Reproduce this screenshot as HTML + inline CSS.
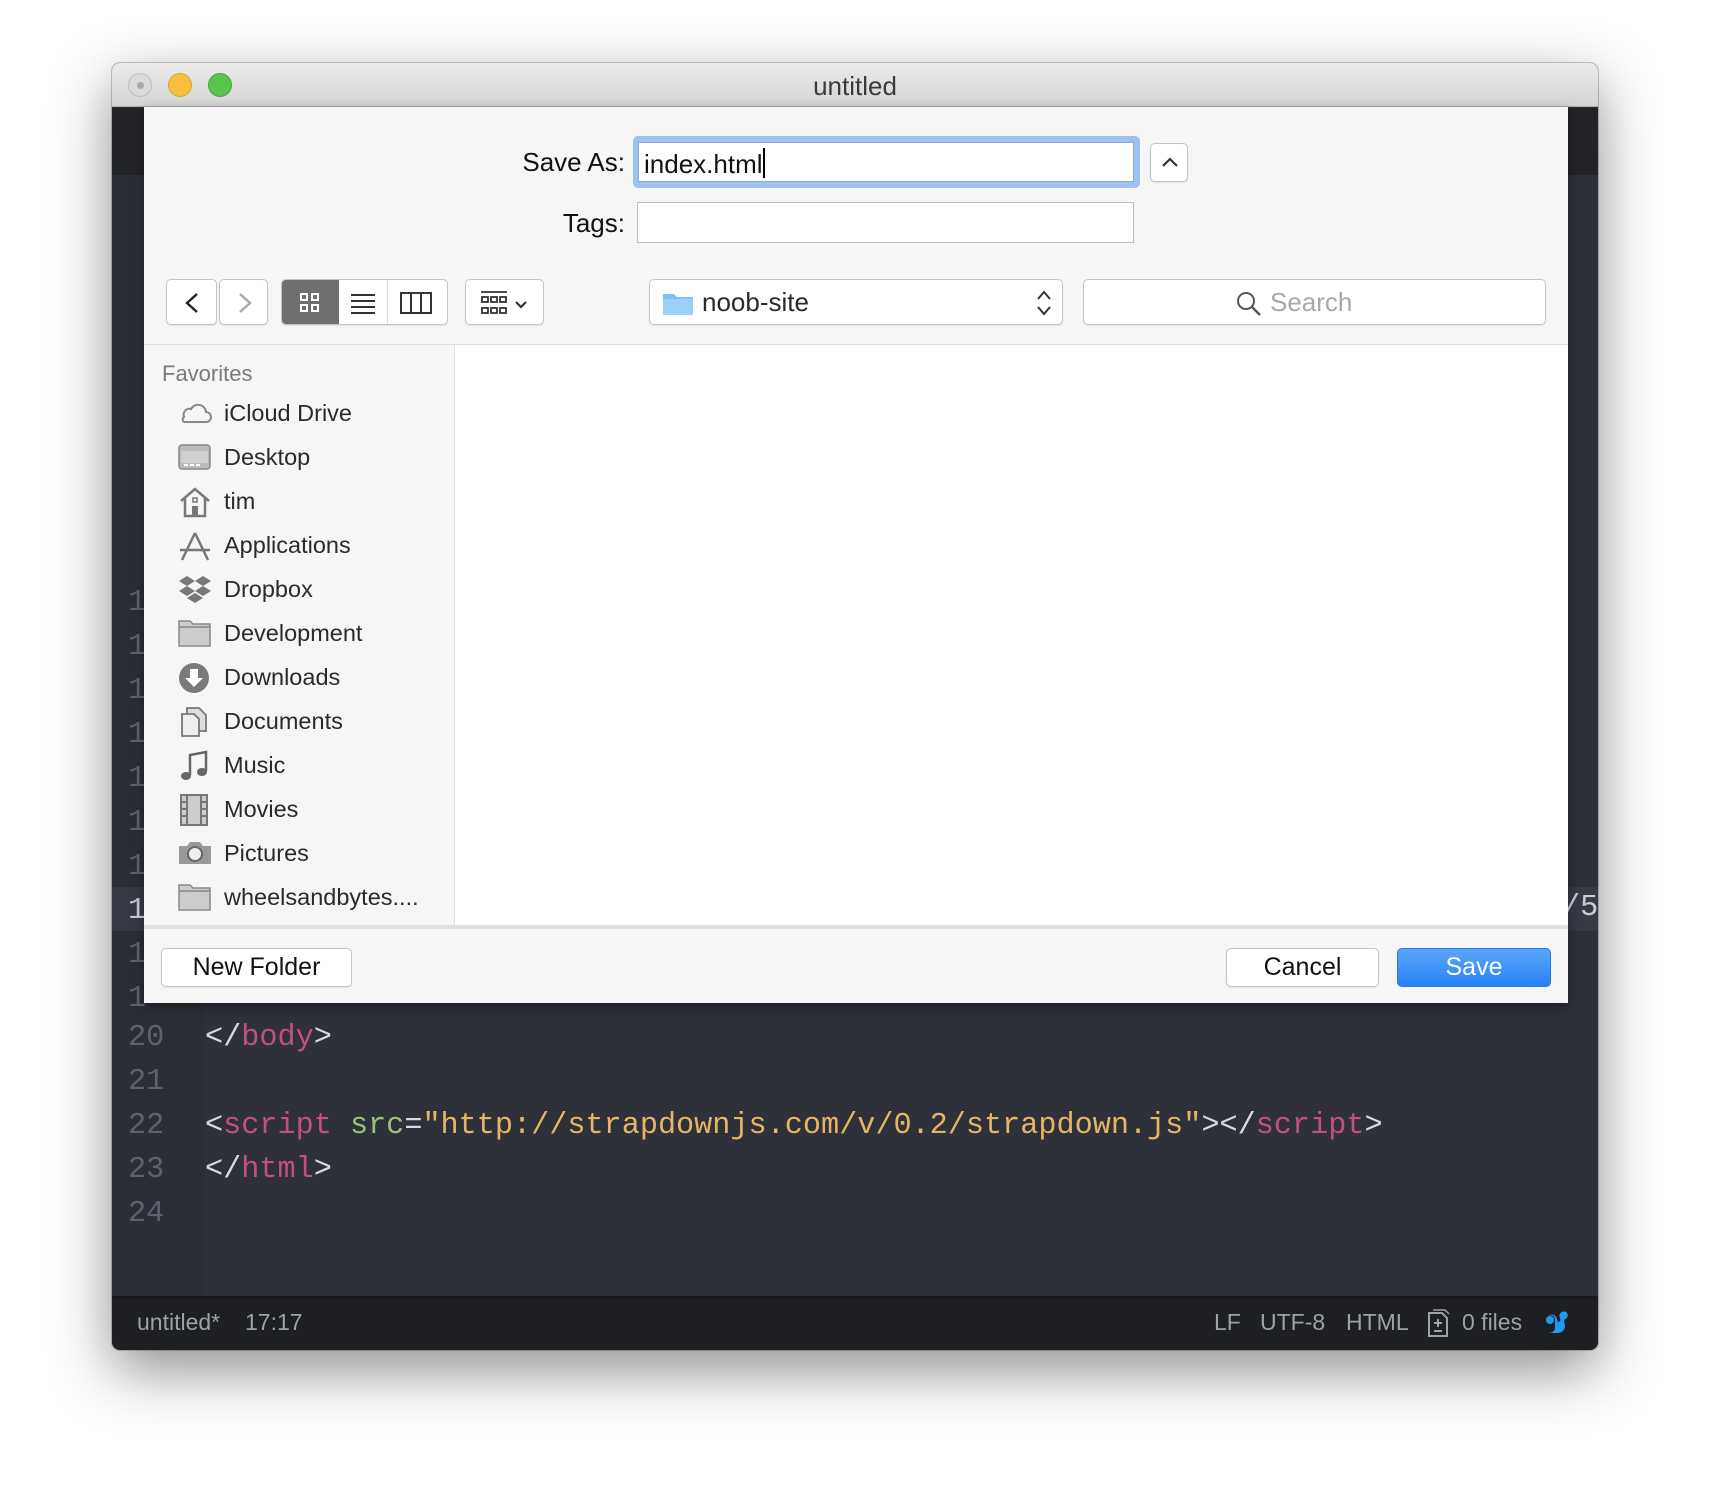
<!DOCTYPE html>
<html><head><meta charset="utf-8"><style>
*{box-sizing:border-box;margin:0;padding:0}
body{width:1710px;height:1510px;background:#fff;position:relative;overflow:hidden;font-family:"Liberation Sans",sans-serif}
.a{position:absolute}
.win{left:112px;top:63px;width:1486px;height:1287px;border-radius:8px;box-shadow:0 20px 60px rgba(0,0,0,.45),0 0 0 1px rgba(0,0,0,.2);background:#2e3139;overflow:hidden}
.tb{left:0;top:0;width:1486px;height:44px;background:linear-gradient(#ebebeb,#d5d5d5);border-bottom:1px solid #a9a9a9}
.dot{width:24px;height:24px;border-radius:50%;top:10px}
.mono{font-family:"Liberation Mono",monospace;font-size:30.2px}
.ln{color:#5c6370;left:16px}
.lbl{font-size:26px;color:#111}
.btn{background:#fff;border:1px solid #c4c4c4;border-radius:5px;box-shadow:0 1px 1px rgba(0,0,0,.08)}
.side div.it{position:absolute;left:0;height:40px;width:300px}
.side .t{position:absolute;left:80px;font-size:23.5px;color:#2a2a2a;top:6px}
.side svg{position:absolute;left:34px;top:4px}
.sb{color:#9da1a8;font-size:23px;top:1310px}
</style></head><body>
<div class="a win">
 <div class="a tb">
  <div class="a dot" style="left:16px;background:#dcdcdc;border:1px solid #bdbdbd"><div class="a" style="left:8px;top:8px;width:7px;height:7px;border-radius:50%;background:#aaa"></div></div>
  <div class="a dot" style="left:56px;background:#f8be3f;border:1px solid #dea236"></div>
  <div class="a dot" style="left:96px;background:#5ac44e;border:1px solid #48a73d"></div>
  <div class="a" style="left:0;width:1486px;text-align:center;top:8px;font-size:26px;color:#3b3b3b">untitled</div>
 </div>
 <div class="a" style="left:0;top:45px;width:1486px;height:67px;background:#222326"></div>
 <div class="a" style="left:0;top:112px;width:93px;height:1135px;background:#2b2e35"></div>
 <div class="a" style="left:0;top:824px;width:1486px;height:44px;background:#363a44"></div>
 <div class="a mono ln" style="top:518px;line-height:44px">1<br>1<br>1<br>1<br>1<br>1<br>1<br><span style="color:#c8ccd4">1</span><br>1<br>1</div>
 <div class="a mono" style="left:1450px;top:828px;color:#c8ccd4">/5</div>
 <div class="a mono ln" style="top:953px;line-height:44px">20<br>21<br>22<br>23<br>24</div>
 <div class="a mono" style="left:93px;top:953px;line-height:44px;color:#d7dae0;white-space:pre">&lt;/<span style="color:#c1507a">body</span>&gt;

&lt;<span style="color:#c1507a">script</span> <span style="color:#98c379">src</span>=<span style="color:#e5b567">"http://strapdownjs.com/v/0.2/strapdown.js"</span>&gt;&lt;/<span style="color:#c1507a">script</span>&gt;
&lt;/<span style="color:#c1507a">html</span>&gt;</div>
 <div class="a" style="left:0;top:1233px;width:1486px;height:3px;background:#18191c"></div>
 <div class="a" style="left:0;top:1236px;width:1486px;height:51px;background:#1e1f22"></div>
 <div class="a sb" style="left:25px;top:1246px">untitled*</div>
 <div class="a sb" style="left:133px;top:1246px">17:17</div>
 <div class="a sb" style="left:1102px;top:1246px">LF</div>
 <div class="a sb" style="left:1148px;top:1246px">UTF-8</div>
 <div class="a sb" style="left:1234px;top:1246px">HTML</div>
 <svg class="a" style="left:1315px;top:1245px" width="24" height="30" viewBox="0 0 24 30"><path d="M2 5h13l5 5v18H2z" fill="none" stroke="#9da1a8" stroke-width="2"/><path d="M6 2h12l4 4" fill="none" stroke="#9da1a8" stroke-width="1.5"/><path d="M7 15h8M11 11v8M7 23h8" stroke="#9da1a8" stroke-width="2"/></svg>
 <div class="a sb" style="left:1350px;top:1246px">0 files</div>
 <svg class="a" style="left:1432px;top:1245px" width="28" height="28" viewBox="0 0 28 28"><path d="M4 8c3-2 7 0 7 4v8c0 3-3 5-7 5h9c5 0 8-3 8-7 0-3-2-5 0-7 3-1 4-5 1-7-4-2-8 2-6 6 1 2 0 4-2 4l-1-3C12 7 7 5 4 8z" fill="#1d9bf0"/><circle cx="6" cy="12" r="4" fill="#1d9bf0"/></svg>
</div>

<div class="a" style="left:144px;top:107px;width:1424px;height:896px;background:#f6f6f6;box-shadow:0 4px 12px rgba(0,0,0,.35)">
 <div class="a lbl" style="right:943px;top:40px">Save As:</div>
 <div class="a" style="left:489px;top:29px;width:507px;height:52px;border-radius:5px;background:#9dc1f1"></div>
 <div class="a" style="left:494px;top:35px;width:496px;height:40px;background:#fff;border:1px solid #8fa9cc"></div>
 <div class="a lbl" style="left:500px;top:41px">index.html<span style="display:inline-block;width:2px;height:30px;background:#000;vertical-align:-5px"></span></div>
 <div class="a btn" style="left:1006px;top:36px;width:38px;height:39px"><svg class="a" style="left:10px;top:12px" width="18" height="12"><path d="M2 10l7-7 7 7" fill="none" stroke="#333" stroke-width="2.2"/></svg></div>
 <div class="a lbl" style="right:943px;top:101px">Tags:</div>
 <div class="a" style="left:493px;top:95px;width:497px;height:41px;background:#fff;border:1px solid #bdbdbd"></div>
 <div class="a btn" style="left:22px;top:172px;width:51px;height:46px"><svg class="a" style="left:16px;top:12px" width="18" height="22"><path d="M14 2L4 11l10 9" fill="none" stroke="#222" stroke-width="2.4"/></svg></div>
 <div class="a btn" style="left:75px;top:172px;width:49px;height:46px"><svg class="a" style="left:16px;top:12px" width="18" height="22"><path d="M4 2l10 9-10 9" fill="none" stroke="#aaa" stroke-width="2.4"/></svg></div>
 <div class="a btn" style="left:137px;top:172px;width:167px;height:46px;overflow:hidden">
  <div class="a" style="left:0;top:0;width:57px;height:46px;background:#6f6f6f"></div>
  <svg class="a" style="left:17px;top:12px" width="22" height="22"><g fill="none" stroke="#fff" stroke-width="2"><rect x="2" y="2" width="6" height="6"/><rect x="13" y="2" width="6" height="6"/><rect x="2" y="13" width="6" height="6"/><rect x="13" y="13" width="6" height="6"/></g></svg>
  <div class="a" style="left:105px;top:0;width:1px;height:46px;background:#ddd"></div>
  <svg class="a" style="left:68px;top:12px" width="26" height="22"><path d="M1 3h24M1 9h24M1 15h24M1 21h24" stroke="#333" stroke-width="2"/></svg>
  <svg class="a" style="left:118px;top:12px" width="32" height="22"><rect x="1" y="1" width="30" height="20" fill="none" stroke="#333" stroke-width="2"/><path d="M11 1v20M21 1v20" stroke="#333" stroke-width="2"/></svg>
 </div>
 <div class="a btn" style="left:321px;top:172px;width:79px;height:46px"><svg class="a" style="left:14px;top:11px" width="54" height="26"><g fill="none" stroke="#333" stroke-width="1.8"><path d="M1 1h26"/><rect x="2" y="6" width="6" height="5"/><rect x="11" y="6" width="6" height="5"/><rect x="20" y="6" width="6" height="5"/><rect x="2" y="17" width="6" height="5"/><rect x="11" y="17" width="6" height="5"/><rect x="20" y="17" width="6" height="5"/><path d="M36 11l5 5 5-5" stroke-width="2.2"/></g></svg></div>
 <div class="a btn" style="left:505px;top:172px;width:414px;height:46px">
  <svg class="a" style="left:12px;top:10px" width="32" height="26"><path d="M1 4h11l3 3h16v18H1z" fill="#7ec0f0"/><path d="M1 9h30v16H1z" fill="#9bd1f7"/></svg>
  <div class="a" style="left:52px;top:7px;font-size:26px;color:#2a2a2a">noob-site</div>
  <svg class="a" style="left:386px;top:8px" width="16" height="30"><path d="M2 11l6-7 6 7M2 19l6 7 6-7" fill="none" stroke="#333" stroke-width="2"/></svg>
 </div>
 <div class="a btn" style="left:939px;top:172px;width:463px;height:46px">
  <svg class="a" style="left:152px;top:11px" width="26" height="26"><circle cx="10" cy="10" r="8" fill="none" stroke="#555" stroke-width="2"/><path d="M16 16l8 8" stroke="#555" stroke-width="2.4"/></svg>
  <div class="a" style="left:186px;top:7px;font-size:26px;color:#a8a8a8">Search</div>
 </div>
 <div class="a" style="left:0;top:237px;width:1424px;height:1px;background:#dcdcdc"></div>
 <div class="a" style="left:310px;top:238px;width:1114px;height:582px;background:#fff;border-left:1px solid #ddd"></div>
 <div class="a" style="left:0;top:818px;width:1424px;height:4px;background:#e0e0e0"></div>
 <div class="a side" style="left:0;top:236px;width:310px;height:580px">
  <div class="a" style="left:18px;top:18px;font-size:22px;color:#7a7a7a">Favorites</div>
  <div class="it" style="top:51px"><svg width="34" height="30"><path d="M6 24h22a5 5 0 0 0 0-10 8 8 0 0 0-15-3 6 6 0 0 0-7 8 3 3 0 0 0 0 5z" fill="none" stroke="#888" stroke-width="2"/></svg><span class="t">iCloud Drive</span></div>
  <div class="it" style="top:95px"><svg width="34" height="30"><rect x="1" y="3" width="31" height="24" rx="3" fill="#bbb" stroke="#888" stroke-width="1.5"/><rect x="3" y="9" width="27" height="12" fill="#d0d0d0"/><path d="M6 23h4M12 23h4M18 23h4" stroke="#fff" stroke-width="2"/></svg><span class="t">Desktop</span></div>
  <div class="it" style="top:139px"><svg width="34" height="32"><path d="M3 15L17 3l14 12M7 12v18h20V12" fill="none" stroke="#777" stroke-width="2.5"/><rect x="14" y="20" width="6" height="10" fill="#777"/><rect x="15" y="12" width="4" height="4" fill="none" stroke="#777" stroke-width="1.5"/></svg><span class="t">tim</span></div>
  <div class="it" style="top:183px"><svg width="34" height="32"><path d="M4 30L17 3M30 30L17 3M2 20h30" stroke="#777" stroke-width="2.5" fill="none"/></svg><span class="t">Applications</span></div>
  <div class="it" style="top:227px"><svg width="34" height="30"><path d="M9 2l8 5-8 5-8-5zM25 2l8 5-8 5-8-5zM9 12l8 5-8 5-8-5zM25 12l8 5-8 5-8-5zM17 19l8 5-8 5-8-5z" fill="#777"/></svg><span class="t">Dropbox</span></div>
  <div class="it" style="top:271px"><svg width="34" height="30"><path d="M1 3h11l3 3h17v22H1z" fill="#ccc" stroke="#888" stroke-width="1.5"/><path d="M1 9h31" stroke="#888" stroke-width="1.5"/></svg><span class="t">Development</span></div>
  <div class="it" style="top:315px"><svg width="34" height="32"><circle cx="16" cy="16" r="15" fill="#7a7a7a"/><path d="M12 7h8v9h5l-9 9-9-9h5z" fill="#fff"/></svg><span class="t">Downloads</span></div>
  <div class="it" style="top:359px"><svg width="34" height="32"><path d="M9 2h12l7 7v16H9z" fill="#ddd" stroke="#777" stroke-width="1.8"/><path d="M4 8h12l5 5v17H4z" fill="#eee" stroke="#777" stroke-width="1.8"/></svg><span class="t">Documents</span></div>
  <div class="it" style="top:403px"><svg width="34" height="32"><path d="M12 25V5l16-3v19" fill="none" stroke="#666" stroke-width="2.5"/><ellipse cx="8" cy="26" rx="5" ry="4" fill="#666"/><ellipse cx="24" cy="22" rx="5" ry="4" fill="#666"/></svg><span class="t">Music</span></div>
  <div class="it" style="top:447px"><svg width="34" height="32"><rect x="3" y="1" width="26" height="30" fill="#ccc" stroke="#777" stroke-width="2"/><path d="M9 1v30M23 1v30M3 8h6M3 15h6M3 22h6M23 8h6M23 15h6M23 22h6" stroke="#777" stroke-width="2"/></svg><span class="t">Movies</span></div>
  <div class="it" style="top:491px"><svg width="34" height="30"><path d="M1 8h8l3-4h10l3 4h8v18H1z" fill="#999"/><circle cx="17" cy="16" r="7" fill="#eee" stroke="#666" stroke-width="2"/></svg><span class="t">Pictures</span></div>
  <div class="it" style="top:535px"><svg width="34" height="30"><path d="M1 3h11l3 3h17v22H1z" fill="#ccc" stroke="#888" stroke-width="1.5"/><path d="M1 9h31" stroke="#888" stroke-width="1.5"/></svg><span class="t">wheelsandbytes....</span></div>
 </div>
 <div class="a btn" style="left:17px;top:841px;width:191px;height:39px;text-align:center;font-size:25px;line-height:37px;color:#111">New Folder</div>
 <div class="a btn" style="left:1082px;top:841px;width:153px;height:39px;text-align:center;font-size:25px;line-height:37px;color:#111">Cancel</div>
 <div class="a" style="left:1253px;top:841px;width:154px;height:39px;border-radius:5px;background:linear-gradient(#5aa6fb,#2a82f5);border:1px solid #2b77e0;text-align:center;font-size:25px;line-height:37px;color:#fff">Save</div>
</div>
</body></html>
